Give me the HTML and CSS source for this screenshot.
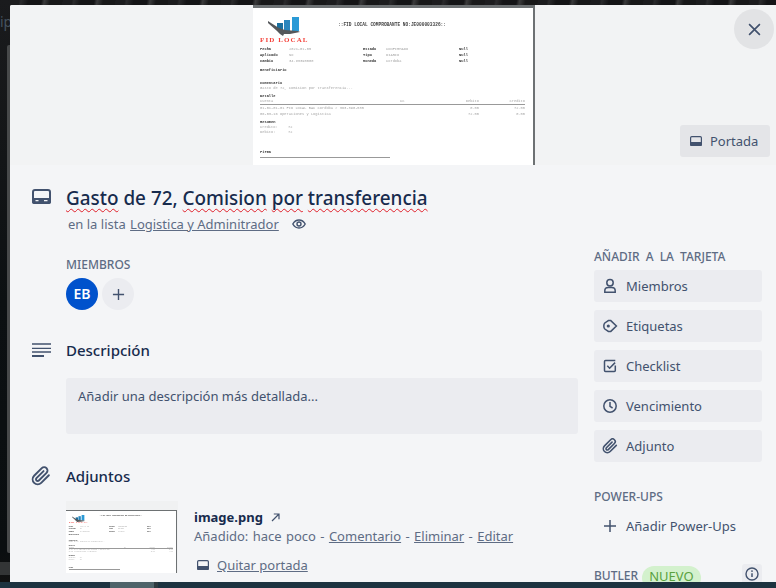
FILE: index.html
```html
<!DOCTYPE html>
<html lang="es">
<head>
<meta charset="utf-8">
<title>Gasto de 72, Comision por transferencia</title>
<link rel="stylesheet" href="styles.css">
</head>
<body>
<div class="page">
  <div class="rail">
    <span class="rail-text">ip</span>
    <div class="rail-list"></div>
    <div class="rail-footer"></div>
  </div>
  <div class="stage">
    <div class="modal">
      <div class="modal-inner">
        <header class="cover">
          <div class="doc">
            <div class="doc-top">
              <div class="doc-brand">
                <svg class="doc-logo" viewBox="0 0 49 20">
                  <rect class="logo-b1" x="17" y="6" width="6" height="8"/>
                  <rect class="logo-b2" x="24" y="3" width="6" height="11"/>
                  <rect class="logo-b3" x="32" y="0" width="7" height="14"/>
                  <path class="logo-plane" d="M8 4l3 2 8 5 6 2 13 1 2 1-10 2-6 0-1 2-3-2-3-3-9-8z"/>
                </svg>
                <div class="doc-name">FID LOCAL</div>
              </div>
              <div class="doc-title">::FID LOCAL COMPROBANTE NO:JE000003326::</div>
            </div>
            <div class="doc-meta">
              <b>Fecha</b><span>2021-01-05</span><b>Estado</b><span>CONFIRMADO</span><b>Null</b>
              <b>Aplicado</b><span>No</span><b>Tipo</b><span>DIARIO</span><b>Null</b>
              <b>Cambio</b><span>34.83390000</span><b>Moneda</b><span>Cordoba</span><b>Null</b>
            </div>
            <div class="doc-line doc-benef"><b>Beneficiario</b></div>
            <div class="doc-line doc-gap-l"><b>Comentario</b></div>
            <div class="doc-line doc-muted">Gasto de 72, Comision por transferencia...</div>
            <div class="doc-line doc-gap-s"><b>Detalle</b></div>
            <div class="doc-table doc-thead"><span>Cuenta</span><span>CC</span><span class="doc-num">Debito</span><span class="doc-num">Credito</span></div>
            <div class="doc-table"><span>01-01-01-01 FID LOCAL BAC Cordoba # 363-390-535</span><span></span><span class="doc-num">0.00</span><span class="doc-num">72.00</span></div>
            <div class="doc-table"><span>06-03-16 Operaciones y Logistica</span><span></span><span class="doc-num">72.00</span><span class="doc-num">0.00</span></div>
            <div class="doc-line doc-gap-s"><b>Resumen</b></div>
            <div class="doc-line doc-muted doc-sum"><span>Credito:</span><span>72</span></div>
            <div class="doc-line doc-muted doc-sum"><span>Debito:</span><span>72</span></div>
            <div class="doc-line doc-gap-xl"><b>Firma</b></div>
            <div class="doc-sign"></div>
          </div>
          <button class="close-btn" aria-label="Cerrar">
            <svg viewBox="0 0 14 14" class="ico-close"><path d="M1.2 1.2l11.6 11.6M12.8 1.2L1.2 12.8"/></svg>
          </button>
          <button class="cover-btn">
            <svg class="ico-cover" viewBox="0 0 12 10"><rect x=".6" y=".6" width="10.8" height="8.8" rx="1.2" class="cover-frame"/><path d="M0 6h12v2.800A1.200 1.200 0 0 1 10.800 10H1.200A1.200 1.200 0 0 1 0 8.800z" class="cover-fill"/></svg>
            <span>Portada</span>
          </button>
        </header>

        <section class="head">
          <svg class="ico-card" viewBox="0 0 19 15"><rect x="1" y="1" width="17" height="13" rx="2" class="card-frame"/><path class="card-fill" d="M0 9h19v4a2 2 0 0 1-2 2H2a2 2 0 0 1-2-2z"/><path class="card-dash" d="M3.500 11.700h3M12 11.700h3.500"/></svg>
          <div class="head-text">
            <h1 class="title"><span class="typo">Gasto</span> de 72, <span class="typo">Comision</span> <span class="typo">por</span> <span class="typo">transferencia</span></h1>
            <p class="subtitle">en la lista <a href="#">Logistica y Adminitrador</a>
              <svg class="ico-eye" viewBox="0 0 14 10"><path d="M.8 5C2.300 2.300 4.400 1 7 1s4.700 1.300 6.200 4C11.700 7.700 9.600 9 7 9S2.300 7.700.8 5z"/><circle cx="7" cy="5" r="2"/></svg>
            </p>
          </div>
        </section>

        <div class="columns">
          <main class="main">
            <div class="indent members">
              <h3 class="label">MIEMBROS</h3>
              <div class="member-row">
                <span class="avatar">EB</span>
                <button class="add-member" aria-label="Añadir miembro"><svg viewBox="0 0 14 14" class="ico-plus"><path d="M7 1v12M1 7h12"/></svg></button>
              </div>
            </div>

            <div class="section-head sec-desc">
              <svg class="ico-lines" viewBox="0 0 19 14"><path d="M0 1h19M0 5.300h19M0 9h19"/><path d="M0 13h12" class="line-thick"/></svg>
              <h2>Descripción</h2>
            </div>
            <div class="indent desc-box">Añadir una descripción más detallada...</div>

            <div class="section-head sec-att">
              <svg class="ico-clip-lg" viewBox="0 0 24 24"><path d="M21.440 11.050l-9.190 9.190a6 6 0 0 1-8.490-8.490l9.190-9.190a4 4 0 0 1 5.660 5.660l-9.200 9.190a2 2 0 0 1-2.830-2.830l8.490-8.480"/></svg>
              <h2>Adjuntos</h2>
            </div>
            <div class="indent attachment">
              <div class="thumb">
                <div class="doc doc-small">
                  <div class="doc-top">
                    <div class="doc-brand">
                      <svg class="doc-logo" viewBox="0 0 49 20">
                        <rect class="logo-b1" x="17" y="6" width="6" height="8"/>
                        <rect class="logo-b2" x="24" y="3" width="6" height="11"/>
                        <rect class="logo-b3" x="32" y="0" width="7" height="14"/>
                        <path class="logo-plane" d="M8 4l3 2 8 5 6 2 13 1 2 1-10 2-6 0-1 2-3-2-3-3-9-8z"/>
                      </svg>
                      <div class="doc-name">FID LOCAL</div>
                    </div>
                    <div class="doc-title">::FID LOCAL COMPROBANTE NO:JE000003326::</div>
                  </div>
                  <div class="doc-meta">
                    <b>Fecha</b><span>2021-01-05</span><b>Estado</b><span>CONFIRMADO</span><b>Null</b>
                    <b>Aplicado</b><span>No</span><b>Tipo</b><span>DIARIO</span><b>Null</b>
                    <b>Cambio</b><span>34.83390000</span><b>Moneda</b><span>Cordoba</span><b>Null</b>
                  </div>
                  <div class="doc-line doc-benef"><b>Beneficiario</b></div>
                  <div class="doc-line doc-gap-l"><b>Comentario</b></div>
                  <div class="doc-line doc-muted">Gasto de 72, Comision por transferencia...</div>
                  <div class="doc-line doc-gap-s"><b>Detalle</b></div>
                  <div class="doc-table doc-thead"><span>Cuenta</span><span>CC</span><span class="doc-num">Debito</span><span class="doc-num">Credito</span></div>
                  <div class="doc-table"><span>01-01-01-01 FID LOCAL BAC Cordoba # 363-390-535</span><span></span><span class="doc-num">0.00</span><span class="doc-num">72.00</span></div>
                  <div class="doc-table"><span>06-03-16 Operaciones y Logistica</span><span></span><span class="doc-num">72.00</span><span class="doc-num">0.00</span></div>
                  <div class="doc-line doc-gap-s"><b>Resumen</b></div>
                  <div class="doc-line doc-muted doc-sum"><span>Credito:</span><span>72</span></div>
                  <div class="doc-line doc-muted doc-sum"><span>Debito:</span><span>72</span></div>
                  <div class="doc-line doc-gap-xl"><b>Firma</b></div>
                  <div class="doc-sign"></div>
                </div>
              </div>
              <div class="att-info">
                <div class="att-name">image.png <svg class="ico-ext" viewBox="0 0 9 9"><path d="M1 8l6.500-6.500M2.800 1h5.200v5.200"/></svg></div>
                <div class="att-meta">Añadido: hace poco - <a href="#">Comentario</a> - <a href="#">Eliminar</a> - <a href="#">Editar</a></div>
                <div class="att-cover">
                  <svg class="ico-cover" viewBox="0 0 12 10"><rect x=".6" y=".6" width="10.8" height="8.8" rx="1.2" class="cover-frame"/><path d="M0 6h12v2.800A1.200 1.200 0 0 1 10.800 10H1.200A1.200 1.200 0 0 1 0 8.800z" class="cover-fill"/></svg>
                  <a href="#">Quitar portada</a>
                </div>
              </div>
            </div>
          </main>

          <aside class="side">
            <h3 class="label label-add">AÑADIR A LA TARJETA</h3>
            <div class="btn-stack">
              <button class="side-btn"><svg class="side-ico" viewBox="0 0 16 16"><circle cx="8" cy="4.800" r="3.200"/><path d="M2.800 14.200v-1.400c0-2 1.600-3.200 3.400-3.200h3.600c1.800 0 3.400 1.200 3.400 3.200v1.400z"/></svg><span>Miembros</span></button>
              <button class="side-btn"><svg class="side-ico" viewBox="0 0 16 16"><path d="M8.800 2.600l5.600 5.400-5.600 5.400H6.400L2.800 11c-.6-.6-1-1.800-1-3s.4-2.400 1-3l3.600-2.400z"/><circle cx="6.300" cy="8" r="1.600" class="ico-solid"/></svg><span>Etiquetas</span></button>
              <button class="side-btn"><svg class="side-ico" viewBox="0 0 16 16"><path d="M13.300 7.500v5a1 1 0 0 1-1 1H3.500a1 1 0 0 1-1-1v-9a1 1 0 0 1 1-1h9.800"/><path d="M5.300 7.800l2.300 2.400 5.500-5.600"/></svg><span>Checklist</span></button>
              <button class="side-btn"><svg class="side-ico" viewBox="0 0 16 16"><circle cx="8" cy="8" r="6.200"/><path d="M8 4v4.400l2.600 1.600"/></svg><span>Vencimiento</span></button>
              <button class="side-btn"><svg class="side-ico" viewBox="0 0 24 24"><path class="clip-stroke" d="M21.440 11.050l-9.190 9.190a6 6 0 0 1-8.490-8.490l9.190-9.190a4 4 0 0 1 5.660 5.660l-9.200 9.190a2 2 0 0 1-2.830-2.830l8.490-8.480"/></svg><span>Adjunto</span></button>
            </div>
            <h3 class="label label-power">POWER-UPS</h3>
            <button class="side-btn side-btn-plain"><svg class="side-ico" viewBox="0 0 16 16"><path d="M8 2v12M2 8h12"/></svg><span>Añadir Power-Ups</span></button>
            <div class="butler">
              <h3 class="label">BUTLER</h3>
              <span class="badge">NUEVO</span>
              <button class="info-btn" aria-label="Información"><svg viewBox="0 0 14 14" class="ico-info"><circle cx="7" cy="7" r="6"/><path d="M7 6.300v3.700"/><circle cx="7" cy="4.100" r=".9" class="ico-solid"/></svg></button>
            </div>
          </aside>
        </div>
      </div>
    </div>
  </div>
  <div class="bottom">
    <div class="bottom-thumb"></div>
    <div class="bottom-sliver"></div>
  </div>
</div>
</body>
</html>
```

FILE: styles.css
```css
* { box-sizing: border-box; }
html, body { margin: 0; height: 100%; overflow: hidden; }
body {
  font-family: "Noto Sans", "Open Sans", sans-serif;
  font-size: 13px;
  line-height: 20px;
  color: #172b4d;
  background: #101214;
}
h1, h2, h3, p { margin: 0; }
button { font: inherit; border: 0; padding: 0; color: inherit; }
svg { display: block; flex: none; }
a { color: inherit; }

.page {
  display: grid;
  grid-template-columns: 10px 1fr;
  grid-template-rows: 582px 6px;
  width: 776px;
  height: 588px;
  overflow: hidden;
}

/* blurred board behind the card */
.rail {
  display: flex;
  flex-direction: column;
  overflow: hidden;
  background: linear-gradient(180deg, #1a1b1d 0, #131517 160px, #0c1012 300px, #0a0e10 550px, #111 100%);
}
.rail-text {
  height: 30px;
  padding-top: 12px;
  color: #46535f;
  font-size: 14px;
  line-height: 20px;
  white-space: nowrap;
}
.rail-list {
  width: 3px;
  height: 508px;
  margin: 15px 0 0 7px;
  background: #47494a;
  border-radius: 2px 0 0 2px;
}
.rail-footer {
  height: 13px;
  margin-top: 9px;
  background: #333536;
}
.stage {
  min-width: 0;
  padding-top: 5px;
  overflow: hidden;
  background: repeating-linear-gradient(100deg, #1c1c1e 0 9px, #2a2a2c 11px, #141416 18px 31px, #3a3a3b 34px, #181819 40px 52px);
}
.modal {
  height: 577px;
  overflow: hidden;
  background: #f4f5f7;
  border-top-left-radius: 2px;
}
.modal-inner {
  width: 768px;
}
.bottom {
  grid-column: 1 / -1;
  display: flex;
  padding-left: 110px;
  background: #1d3340;
}
.bottom-thumb { width: 44px; background: #4e6369; }
.bottom-sliver { width: 4px; background: #2e3a40; }

/* cover */
.cover {
  position: relative;
  display: flex;
  justify-content: center;
  height: 160px;
  background: #f2f3f4;
}
.close-btn {
  position: absolute;
  top: 4px;
  right: 4px;
  display: flex;
  align-items: center;
  justify-content: center;
  width: 40px;
  height: 40px;
  border-radius: 50%;
  background: #e2e3e5;
}
.ico-close { width: 13px; height: 13px; }
.ico-close path { fill: none; stroke: #42526e; stroke-width: 1.800; }
.cover-btn {
  position: absolute;
  right: 8px;
  bottom: 8px;
  display: flex;
  align-items: center;
  gap: 8px;
  width: 90px;
  height: 32px;
  padding-left: 10px;
  border-radius: 3px;
  background: #e4e5e8;
  color: #42526e;
}
.ico-cover { width: 12px; height: 10px; }
.cover-frame { fill: none; stroke: #42526e; stroke-width: 1.200; }
.cover-fill { fill: #42526e; }

/* invoice picture: all measures derive from --u */
.doc {
  --u: 1px;
  width: calc(var(--u) * 282);
  height: calc(var(--u) * 160);
  overflow: hidden;
  padding-left: calc(var(--u) * 7);
  padding-right: calc(var(--u) * 8);
  background: #fff;
  border-top: calc(var(--u) * 3) solid #6d7173;
  border-right: calc(var(--u) * 2) solid #6d7173;
  font-family: "Liberation Mono", monospace;
  font-size: calc(var(--u) * 3.700);
  line-height: calc(var(--u) * 5);
  color: #a6a6a6;
  filter: blur(.6px);
}
.doc b { color: #333; font-weight: 700; }
.doc-top {
  display: flex;
  height: calc(var(--u) * 38);
}
.doc-brand {
  width: calc(var(--u) * 78);
  padding-top: calc(var(--u) * 9);
}
.doc-logo {
  width: calc(var(--u) * 49);
  height: calc(var(--u) * 20);
}
.logo-plane { fill: #55585b; }
.logo-b1 { fill: #1b6f9e; }
.logo-b2 { fill: #2a86bd; }
.logo-b3 { fill: #2a9ad6; }
.doc-name {
  margin-top: calc(var(--u) * -.5);
  font-family: "Liberation Serif", serif;
  font-size: calc(var(--u) * 7);
  font-weight: 700;
  line-height: calc(var(--u) * 6);
  letter-spacing: calc(var(--u) * 1.100);
  color: #f4433c;
  white-space: nowrap;
}
.doc-title {
  padding-top: calc(var(--u) * 14);
  font-size: calc(var(--u) * 4.500);
  font-weight: 700;
  color: #444;
  white-space: nowrap;
}
.doc-meta {
  display: grid;
  grid-template-columns: calc(var(--u) * 29) calc(var(--u) * 74) calc(var(--u) * 23) calc(var(--u) * 73) auto;
  grid-auto-rows: calc(var(--u) * 6);
  line-height: calc(var(--u) * 6);
}
.doc-line { white-space: nowrap; }
.doc-benef { margin-top: calc(var(--u) * 3); line-height: calc(var(--u) * 6); }
.doc-gap-l { margin-top: calc(var(--u) * 7.500); }
.doc-gap-s { margin-top: calc(var(--u) * 3); }
.doc-gap-xl { margin-top: calc(var(--u) * 15); }
.doc-table {
  display: grid;
  grid-template-columns: calc(var(--u) * 140) calc(var(--u) * 59) calc(var(--u) * 20) 1fr;
  height: calc(var(--u) * 6);
  line-height: calc(var(--u) * 6);
  white-space: nowrap;
}
.doc-thead {
  height: calc(var(--u) * 6.500);
  border-bottom: calc(var(--u) * 1.400) solid #999;
  line-height: calc(var(--u) * 5);
}
.doc-num { text-align: right; }
.doc-sum {
  display: grid;
  grid-template-columns: calc(var(--u) * 28) auto;
}
.doc-sign {
  width: calc(var(--u) * 130);
  height: calc(var(--u) * 1.700);
  margin-top: calc(var(--u) * 1.500);
  background: #999;
}
.doc-small {
  --u: .394px;
  filter: blur(.45px);
}

/* card head */
.head {
  display: grid;
  grid-template-columns: 34px 1fr;
  height: 82px;
  padding: 19px 0 0 22px;
}
.ico-card { width: 19px; height: 15px; margin-top: 5px; }
.card-frame { fill: none; stroke: #42526e; stroke-width: 2; }
.card-fill { fill: #42526e; }
.card-dash { fill: none; stroke: #f4f5f7; stroke-width: 1.200; }
.title {
  font-size: 18.900px;
  font-weight: 500;
  line-height: 28px;
  white-space: nowrap;
}
.typo { text-decoration: underline wavy #e0202a 1px; text-underline-offset: 3px; text-decoration-skip-ink: none; }
.subtitle {
  display: flex;
  align-items: center;
  gap: 1px;
  padding-left: 2px;
  margin-top: 2px;
  color: #5e6c84;
  font-size: 13px;
  line-height: 20px;
  white-space: pre;
}
.ico-eye { width: 14px; height: 10px; margin-left: 12px; }
.ico-eye path, .ico-eye circle { fill: none; stroke: #42526e; stroke-width: 1.400; }

/* columns */
.columns {
  display: flex;
  padding-left: 22px;
}
.main { width: 546px; }
.indent { margin-left: 34px; }
.label {
  color: #5e6c84;
  font-size: 12px;
  font-weight: 500;
  line-height: 20px;
  white-space: nowrap;
}
.label-add { word-spacing: 3px; }
.members { padding-top: 8px; }
.member-row {
  display: flex;
  gap: 4px;
  margin-top: 3px;
}
.avatar {
  width: 32px;
  height: 32px;
  border-radius: 50%;
  background: #0052cc;
  color: #fff;
  font-size: 14px;
  font-weight: 600;
  line-height: 32px;
  text-align: center;
}
.add-member {
  display: flex;
  align-items: center;
  justify-content: center;
  width: 32px;
  height: 32px;
  border-radius: 50%;
  background: #ebecf0;
}
.ico-plus { width: 13px; height: 13px; }
.ico-plus path { stroke: #42526e; stroke-width: 1.500; fill: none; }

.section-head {
  display: grid;
  grid-template-columns: 34px 1fr;
  align-items: center;
  height: 24px;
}
.section-head h2 {
  font-size: 15px;
  font-weight: 500;
  line-height: 24px;
}
.sec-desc { margin-top: 28px; }
.sec-att { margin-top: 30px; }
.ico-lines { width: 19px; height: 14px; }
.ico-lines path { fill: none; stroke: #42526e; stroke-width: 1.300; }
.ico-lines .line-thick { stroke-width: 2; }
.ico-clip-lg { width: 20px; height: 20px; margin-left: -1px; }
.ico-clip-lg path { fill: none; stroke: #42526e; stroke-width: 2.300; stroke-linecap: round; stroke-linejoin: round; }
.desc-box {
  height: 56px;
  margin-top: 16px;
  padding: 8px 12px;
  border-radius: 3px;
  background: #ebecf0;
  color: #42526e;
}

.attachment {
  display: flex;
  gap: 16px;
  margin-top: 13px;
}
.thumb {
  display: flex;
  flex: none;
  align-items: flex-end;
  width: 112px;
  height: 72px;
  background: #f0f1f2;
}
.att-info { padding-top: 7px; }
.att-name {
  display: flex;
  align-items: center;
  gap: 8px;
  font-weight: 700;
  line-height: 18px;
}
.ico-ext { width: 9px; height: 9px; }
.ico-ext path { fill: none; stroke: #42526e; stroke-width: 1.200; }
.att-meta {
  margin-top: 1px;
  color: #5e6c84;
  line-height: 18px;
  word-spacing: 1px;
  white-space: nowrap;
}
.att-cover {
  display: flex;
  align-items: center;
  gap: 8px;
  margin-top: 10px;
  padding-left: 3px;
  color: #5e6c84;
}

/* sidebar */
.side { width: 168px; margin-left: 16px; }
.btn-stack {
  display: flex;
  flex-direction: column;
  gap: 8px;
  margin-top: 3px;
}
.side-btn {
  display: flex;
  align-items: center;
  gap: 8px;
  width: 100%;
  height: 32px;
  padding-left: 8px;
  border-radius: 3px;
  background: #ebecf0;
  color: #42526e;
  text-align: left;
}
.side-btn-plain { margin-top: 3px; background: transparent; }
.side-ico { width: 16px; height: 16px; }
.side-ico path, .side-ico circle { fill: none; stroke: #42526e; stroke-width: 1.500; }
.side-ico .clip-stroke { stroke-width: 2.400; stroke-linecap: round; stroke-linejoin: round; }
.side-ico .ico-solid, .ico-info .ico-solid { fill: #42526e; stroke: none; }
.label-power { margin-top: 25px; }
.butler {
  display: flex;
  align-items: flex-start;
  margin-top: 22px;
}
.butler .label { line-height: 24px; }
.badge {
  margin: 2px 0 0 4px;
  padding: 0 7px;
  border-radius: 12px;
  background: #d3f1cd;
  color: #5aa13f;
  line-height: 20px;
  height: 24px;
}
.info-btn {
  display: flex;
  justify-content: center;
  width: 20px;
  height: 24px;
  padding-top: 3px;
  margin-left: auto;
  border-radius: 3px;
  background: #ebecf0;
}
.ico-info { width: 14px; height: 14px; }
.ico-info circle { fill: none; stroke: #42526e; stroke-width: 1.400; }
.ico-info path { stroke: #42526e; stroke-width: 1.500; fill: none; }
```
